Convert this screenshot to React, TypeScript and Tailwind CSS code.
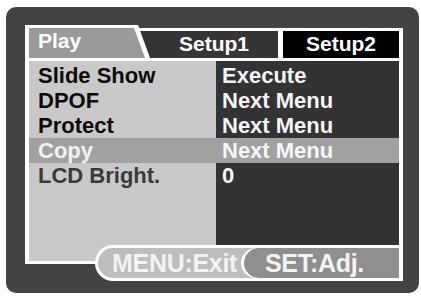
import React from "react";

const rows = [
  { label: "Slide Show", value: "Execute", tone: "normal" },
  { label: "DPOF", value: "Next Menu", tone: "normal" },
  { label: "Protect", value: "Next Menu", tone: "normal" },
  { label: "Copy", value: "Next Menu", tone: "active" },
  { label: "LCD Bright.", value: "0", tone: "dim" },
];

const App = () => {
  return (
    <div className="w-[421px] h-[296px] bg-white pt-[7px] pl-[6px] font-['Liberation_Sans',Arial,sans-serif] font-bold">
      <div className="w-[413px] h-[286px] rounded-[10px] bg-[#434343] pt-[18px] pl-[19px]">
        <div className="relative w-[378px]">
          {/* tabs */}
          <div className="flex items-end h-[33px]">
            <div className="relative z-10 flex-none w-[125px] h-[33px]">
              <div className="absolute inset-0 bg-white [clip-path:polygon(0_0,113px_0,125px_33px,0_33px)]" />
              <div className="absolute inset-0 bg-[#9a9a9a] [clip-path:polygon(4px_3px,109px_3px,120px_33px,4px_33px)] pt-[3px] pl-[13px] text-[21px] leading-[26px] text-white">
                Play
              </div>
            </div>
            <div className="flex-none w-[143px] h-[30px] -ml-[15px] pl-[15px] border-t-[3px] border-white bg-[#353535] text-center text-[21px] leading-[26px] text-white">
              Setup1
            </div>
            <div className="flex-none w-[125px] h-[30px] border-t-[3px] border-l-[5px] border-r-4 border-white bg-black text-center text-[21px] leading-[26px] text-white">
              Setup2
            </div>
          </div>

          {/* menu body */}
          <div className="flex h-[206px] border-x-4 border-y-[3px] border-white text-[22px] leading-[25px]">
            <div className="flex-none w-[187px] bg-[#c9c9c9] pt-[2px]">
              {rows.map((r) => (
                <div
                  key={r.label}
                  className={
                    r.tone === "active"
                      ? "h-[25px] pl-[9px] bg-[#a1a1a1] text-[#f2f2f2]"
                      : r.tone === "dim"
                      ? "h-[25px] pl-[9px] text-[#3a3a3a]"
                      : "h-[25px] pl-[9px] text-[#0a0a0a]"
                  }
                >
                  {r.label}
                </div>
              ))}
            </div>
            <div className="flex-1 bg-[#333333] pt-[2px]">
              {rows.map((r) => (
                <div
                  key={r.label}
                  className={
                    r.tone === "active"
                      ? "h-[25px] pl-[6px] bg-[#a1a1a1] text-[#f7f7f7]"
                      : "h-[25px] pl-[6px] text-[#f5f5f5]"
                  }
                >
                  {r.value}
                </div>
              ))}
            </div>
          </div>

          {/* key hints over the bottom of the menu */}
          <div className="absolute left-[70px] right-0 top-[220px] h-[36px] flex bg-white rounded-l-[18px] pt-[3px] pb-[3px] pl-[3px] pr-[4px] text-[25px] leading-[24px] tracking-[-0.3px]">
            <div className="flex-none w-[157px] h-[30px] rounded-l-[15px] bg-[#bdbdbd] pl-[14px] pt-[3px] text-[#f3f3f3]">
              MENU:Exit
            </div>
            <div className="flex-1 -ml-[14px] h-[30px] rounded-l-[16px] bg-white pl-[3px]">
              <div className="h-full rounded-l-[15px] bg-[#8f8f8f] pl-[21px] pt-[3px] text-[#f3f3f3]">
                SET:Adj.
              </div>
            </div>
          </div>
        </div>
      </div>
    </div>
  );
};

export default App;
